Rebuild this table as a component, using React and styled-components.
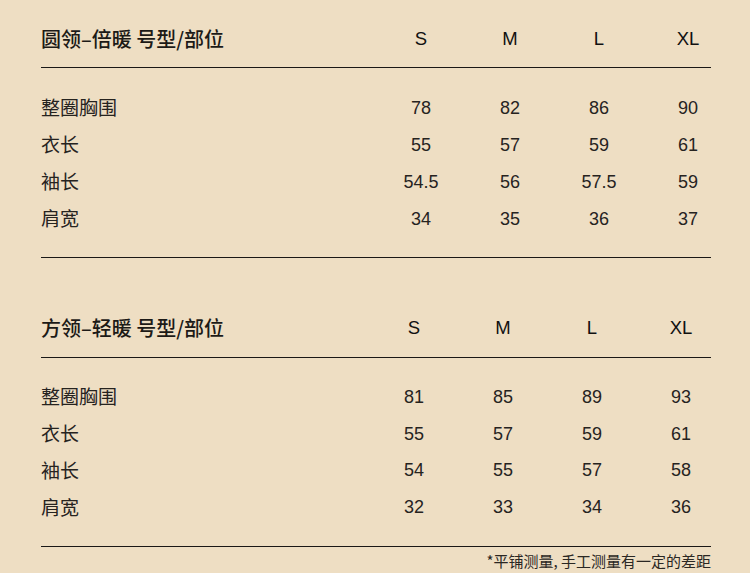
import React from "react";
import styled, { createGlobalStyle } from "styled-components";

const GlobalStyle = createGlobalStyle`
  html, body {
    margin: 0;
    padding: 0;
    background: #eedec3;
  }
  body {
    font-family: "Liberation Sans", "Noto Sans CJK SC", sans-serif;
    color: #1c1a17;
  }
`;

const tables = [
  {
    title: "圆领–倍暖 号型/部位",
    labelWidth: 335.5,
    rowHeight: 37,
    top: 21,
    bottom: 20.5,
    rows: [
      ["整圈胸围", "78", "82", "86", "90"],
      ["衣长", "55", "57", "59", "61"],
      ["袖长", "54.5", "56", "57.5", "59"],
      ["肩宽", "34", "35", "36", "37"],
    ],
  },
  {
    title: "方领–轻暖 号型/部位",
    labelWidth: 328.5,
    rowHeight: 36.8,
    top: 53,
    bottom: 21.5,
    rows: [
      ["整圈胸围", "81", "85", "89", "93"],
      ["衣长", "55", "57", "59", "61"],
      ["袖长", "54", "55", "57", "58"],
      ["肩宽", "32", "33", "34", "36"],
    ],
  },
];

const sizes = ["S", "M", "L", "XL"];

export default function App() {
  return (
    <Page>
      <GlobalStyle />
      {tables.map((t) => (
        <Section key={t.title}>
          <HeaderRow $label={t.labelWidth} $top={t.top}>
            <Title>{t.title}</Title>
            {sizes.map((s) => (
              <SizeCell key={s}>{s}</SizeCell>
            ))}
          </HeaderRow>
          <Rule />
          <Body $bottom={t.bottom}>
            {t.rows.map((r) => (
              <Row key={r[0]} $label={t.labelWidth} $h={t.rowHeight}>
                <Label>{r[0]}</Label>
                {r.slice(1).map((v, i) => (
                  <Value key={i}>{v}</Value>
                ))}
              </Row>
            ))}
          </Body>
          <Rule />
        </Section>
      ))}
      <Note>*平铺测量, 手工测量有一定的差距</Note>
    </Page>
  );
}

const Page = styled.div`
  width: 750px;
  height: 573px;
  overflow: hidden;
  padding-left: 41px;
  box-sizing: border-box;
`;

const Section = styled.div`
  width: 670px;
`;

const HeaderRow = styled.div`
  display: grid;
  grid-template-columns: ${(p) => p.$label}px repeat(4, 89px);
  align-items: center;
  height: 34px;
  padding-top: ${(p) => p.$top}px;
  margin-bottom: 12px;
`;

const Title = styled.div`
  font-family: "Noto Sans CJK SC", sans-serif;
  font-size: 20px;
  font-weight: 500;
  white-space: nowrap;
`;

const SizeCell = styled.div`
  font-size: 18.5px;
  text-align: center;
  color: #111;
  padding-top: 1px;
`;

const Rule = styled.div`
  width: 670px;
  height: 1px;
  background: #1a1816;
`;

const Body = styled.div`
  padding: 20px 0 ${(p) => p.$bottom}px;
`;

const Row = styled.div`
  display: grid;
  grid-template-columns: ${(p) => p.$label}px repeat(4, 89px);
  align-items: center;
  height: ${(p) => p.$h}px;
`;

const Label = styled.div`
  font-family: "Noto Sans CJK SC", sans-serif;
  font-size: 19px;
  color: #26231f;
`;

const Value = styled.div`
  font-size: 18px;
  text-align: center;
  color: #26231f;
  padding-top: 3px;
`;

const Note = styled.div`
  width: 670px;
  text-align: right;
  font-family: "Noto Sans CJK SC", sans-serif;
  font-size: 15px;
  line-height: 18px;
  margin-top: 5px;
  color: #2a2723;
  white-space: nowrap;
`;
